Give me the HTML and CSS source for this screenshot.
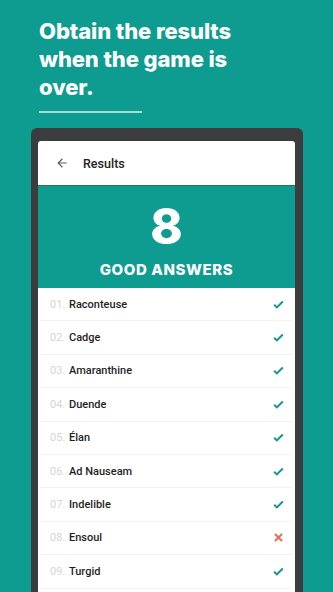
FILE: index.html
```html
<!DOCTYPE html>
<html>
<head>
<meta charset="utf-8">
<link rel="stylesheet" href="styles.css">
</head>
<body>
<div class="page">
  <h1 class="title">Obtain the results<br>when the game is<br>over.</h1>
  <div class="underline"></div>
  <div class="phone">
    <div class="screen">
      <div class="toolbar">
        <svg class="back" width="14" height="14" viewBox="0 0 24 24"><path d="M20 11H7.83l5.59-5.59L12 4l-8 8 8 8 1.41-1.41L7.83 13H20v-2z" fill="#5f5f5f"/></svg>
        <span class="tb-title">Results</span>
      </div>
      <div class="score">
        <div class="score-num">8</div>
        <div class="score-label">GOOD ANSWERS</div>
      </div>
      <ul class="list">
        <li class="row"><span class="num">01.</span><span class="word">Raconteuse</span><svg class="mark" viewBox="0 0 24 24"><path d="M4 12.5l5 5L20 6.5" class="ok"/></svg></li>
        <li class="row"><span class="num">02.</span><span class="word">Cadge</span><svg class="mark" viewBox="0 0 24 24"><path d="M4 12.5l5 5L20 6.5" class="ok"/></svg></li>
        <li class="row"><span class="num">03.</span><span class="word">Amaranthine</span><svg class="mark" viewBox="0 0 24 24"><path d="M4 12.5l5 5L20 6.5" class="ok"/></svg></li>
        <li class="row"><span class="num">04.</span><span class="word">Duende</span><svg class="mark" viewBox="0 0 24 24"><path d="M4 12.5l5 5L20 6.5" class="ok"/></svg></li>
        <li class="row"><span class="num">05.</span><span class="word">Élan</span><svg class="mark" viewBox="0 0 24 24"><path d="M4 12.5l5 5L20 6.5" class="ok"/></svg></li>
        <li class="row"><span class="num">06.</span><span class="word">Ad Nauseam</span><svg class="mark" viewBox="0 0 24 24"><path d="M4 12.5l5 5L20 6.5" class="ok"/></svg></li>
        <li class="row"><span class="num">07.</span><span class="word">Indelible</span><svg class="mark" viewBox="0 0 24 24"><path d="M4 12.5l5 5L20 6.5" class="ok"/></svg></li>
        <li class="row"><span class="num">08.</span><span class="word">Ensoul</span><svg class="mark" viewBox="0 0 24 24"><path d="M5.5 5.5l13 13M18.5 5.5l-13 13" class="bad"/></svg></li>
        <li class="row"><span class="num">09.</span><span class="word">Turgid</span><svg class="mark" viewBox="0 0 24 24"><path d="M4 12.5l5 5L20 6.5" class="ok"/></svg></li>
      </ul>
    </div>
  </div>
</div>
</body>
</html>
```
FILE: styles.css
```css
html, body {
  margin: 0;
  padding: 0;
  background: #0f9c90;
  overflow: hidden;
}
.page {
  width: 333px;
  height: 592px;
  overflow: hidden;
  font-family: "Inter", "Roboto", sans-serif;
}
.title {
  margin: 0;
  padding: 17px 0 0 39px;
  color: #ffffff;
  font-family: "Inter", sans-serif;
  font-weight: 800;
  font-size: 22px;
  line-height: 28px;
  letter-spacing: -0.1px;
  white-space: nowrap;
}
.underline {
  margin: 10px 0 0 39px;
  width: 103px;
  height: 2px;
  background: #a5ddd7;
}
.phone {
  margin: 15px 0 0 31px;
  width: 272px;
  height: 480px;
  box-sizing: border-box;
  padding: 13px 8px 0 7px;
  background: #3c3b3e;
  border-radius: 6px 6px 0 0;
}
.screen {
  background: #ffffff;
  border-radius: 3px 3px 0 0;
  overflow: hidden;
  height: 100%;
}
.toolbar {
  height: 45px;
  display: flex;
  align-items: center;
  padding-left: 17px;
  box-sizing: border-box;
  border-bottom: 1px solid #2d6e68;
}
.back {
  display: block;
}
.tb-title {
  margin-left: 14px;
  font-family: "Roboto", sans-serif;
  font-weight: 500;
  font-size: 12.5px;
  color: #222222;
}
.score {
  background: #0f9c90;
  height: 102px;
  display: flex;
  flex-direction: column;
  align-items: center;
  color: #ffffff;
}
.score-num {
  margin-top: 16px;
  font-family: "Inter", sans-serif;
  font-weight: 800;
  font-size: 49px;
  line-height: 50px;
}
.score-label {
  margin-top: 9px;
  font-family: "Inter", sans-serif;
  font-weight: 800;
  font-size: 15px;
  line-height: 18px;
  letter-spacing: 0.6px;
}
.list {
  list-style: none;
  margin: 0;
  padding: 0;
}
.row {
  height: 33.4px;
  box-sizing: border-box;
  display: flex;
  align-items: center;
  margin: 0 3px 0 2px;
  padding: 0 7px 0 10px;
  border-bottom: 1px solid #f2f2f2;
  font-family: "Roboto", sans-serif;
  font-size: 11px;
}
.num {
  color: #d4d4d8;
  width: 19px;
}
.word {
  font-weight: 500;
  color: #1f1f1f;
  flex: 1;
}
.mark {
  width: 13px;
  height: 13px;
}
.ok {
  fill: none;
  stroke: #13978c;
  stroke-width: 3.6;
}
.bad {
  fill: none;
  stroke: #ee6b57;
  stroke-width: 3.6;
}
```
